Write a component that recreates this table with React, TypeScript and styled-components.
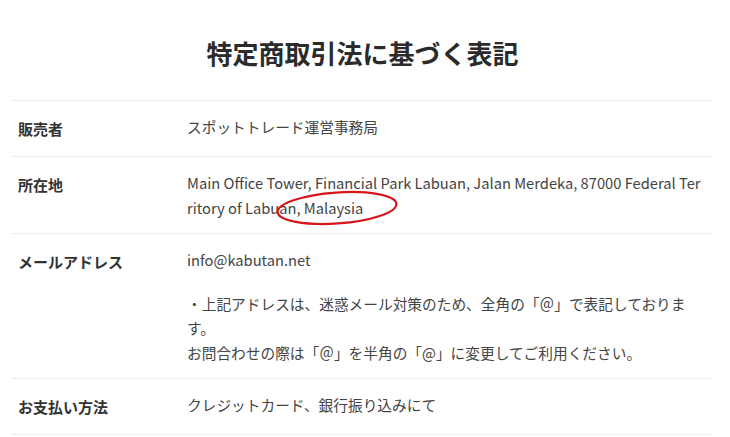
import styled, { createGlobalStyle } from "styled-components";

const GlobalStyle = createGlobalStyle`
  * {
    box-sizing: border-box;
  }
  body {
    margin: 0;
    background: #fff;
    font-family: "Noto Sans CJK JP", "Noto Sans", sans-serif;
    color: #333;
  }
`;

interface Row {
  label: string;
  lines: string[][];
}

const rows: Row[] = [
  { label: "販売者", lines: [["スポットトレード運営事務局"]] },
  {
    label: "所在地",
    lines: [
      [
        "Main Office Tower, Financial Park Labuan, Jalan Merdeka, 87000 Federal Territory of Labuan, Malaysia",
      ],
    ],
  },
  {
    label: "メールアドレス",
    lines: [
      ["info@kabutan.net"],
      [
        "・上記アドレスは、迷惑メール対策のため、全角の「＠」で表記しております。",
        "お問合わせの際は「＠」を半角の「@」に変更してご利用ください。",
      ],
    ],
  },
  { label: "お支払い方法", lines: [["クレジットカード、銀行振り込みにて"]] },
];

const App = () => {
  return (
    <Page>
      <GlobalStyle />
      <Title>特定商取引法に基づく表記</Title>
      <Table>
        {rows.map((row) => (
          <TableRow key={row.label}>
            <Label>{row.label}</Label>
            <Value>
              {row.lines.map((para, i) => (
                <Paragraph key={i}>
                  {para.map((line, j) => (
                    <span key={j}>
                      {j > 0 && <br />}
                      {line}
                    </span>
                  ))}
                </Paragraph>
              ))}
            </Value>
          </TableRow>
        ))}
      </Table>
      <Mark width="130" height="40" viewBox="0 0 130 40">
        <ellipse
          cx="62"
          cy="20"
          rx="59.5"
          ry="15.5"
          transform="rotate(-4 62 20)"
          fill="none"
          stroke="#d8141c"
          strokeWidth="2.2"
        />
      </Mark>
    </Page>
  );
};

export default App;

const Page = styled.div`
  position: relative;
  width: 730px;
  padding: 33px 17px 0 12px;
`;

const Title = styled.h1`
  margin: 0 0 28px;
  text-align: center;
  font-size: 26px;
  line-height: 39px;
  font-weight: 700;
  color: #2b2b2b;
`;

const Table = styled.div`
  border-top: 1px solid #ececec;
`;

const TableRow = styled.div`
  display: grid;
  grid-template-columns: 175px 1fr;
  padding: 14px 9px 13px 0;
  border-bottom: 1px solid #ececec;
`;

const Label = styled.div`
  padding-left: 6px;
  font-size: 15px;
  line-height: 28px;
  font-weight: 700;
  color: #333;
`;

const Value = styled.div`
  display: flex;
  flex-direction: column;
  gap: 19px;
  font-size: 14.7px;
  line-height: 24.5px;
  color: #444;
  word-break: break-all;
`;

const Paragraph = styled.p`
  margin: 0;
`;

const Mark = styled.svg`
  position: absolute;
  left: 275px;
  top: 188px;
  pointer-events: none;
`;
